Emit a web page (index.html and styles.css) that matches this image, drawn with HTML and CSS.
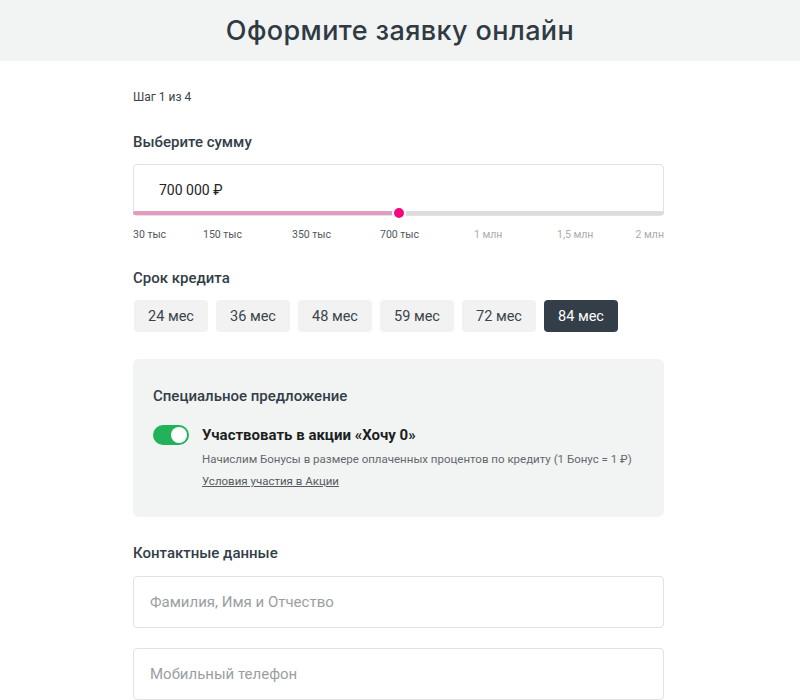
FILE: index.html
```html
<!DOCTYPE html>
<html lang="ru">
<head>
<meta charset="utf-8">
<title>Оформите заявку онлайн</title>
<link rel="stylesheet" href="styles.css">
</head>
<body>
<header class="hero">
  <h1 class="hero-title">Оформите заявку онлайн</h1>
</header>
<main class="form">
  <div class="step">Шаг 1 из 4</div>

  <h2 class="section-title">Выберите сумму</h2>
  <div class="amount">
    <div class="amount-value">700 000 ₽</div>
    <div class="slider">
      <div class="slider-fill" style="width: 50%"></div>
      <div class="slider-thumb" style="left: 50%"></div>
    </div>
  </div>
  <div class="scale">
    <span class="tick" style="left: 0px">30 тыс</span>
    <span class="tick" style="left: 70px">150 тыс</span>
    <span class="tick" style="left: 159px">350 тыс</span>
    <span class="tick" style="left: 247px">700 тыс</span>
    <span class="tick tick-muted" style="left: 341px">1 млн</span>
    <span class="tick tick-muted" style="left: 424px">1,5 млн</span>
    <span class="tick tick-muted tick-end">2 млн</span>
  </div>

  <h2 class="section-title">Срок кредита</h2>
  <div class="terms">
    <button class="term">24 мес</button>
    <button class="term">36 мес</button>
    <button class="term">48 мес</button>
    <button class="term">59 мес</button>
    <button class="term">72 мес</button>
    <button class="term term-active">84 мес</button>
  </div>

  <section class="offer">
    <h3 class="offer-title">Специальное предложение</h3>
    <div class="offer-row">
      <span class="toggle"><span class="toggle-knob"></span></span>
      <div class="offer-body">
        <div class="offer-name">Участвовать в акции «Хочу 0»</div>
        <div class="offer-desc">Начислим Бонусы в размере оплаченных процентов по кредиту (1 Бонус = 1 ₽)</div>
        <a class="offer-link" href="#">Условия участия в Акции</a>
      </div>
    </div>
  </section>

  <h2 class="section-title contacts-title">Контактные данные</h2>
  <div class="field"><span class="placeholder">Фамилия, Имя и Отчество</span></div>
  <div class="field"><span class="placeholder">Мобильный телефон</span></div>
</main>
</body>
</html>
```
FILE: styles.css
```css
* { box-sizing: border-box; }
body {
  margin: 0;
  font-family: Roboto, "Liberation Sans", sans-serif;
  color: #333e48;
  background: #fff;
}
.hero {
  height: 61px;
  background: #f2f3f3;
  display: flex;
  align-items: center;
  justify-content: center;
}
.hero-title {
  margin: 0;
  font-family: Inter, "Noto Sans", sans-serif;
  font-size: 27px;
  font-weight: 500;
  color: #2f3a43;
  letter-spacing: 0.4px;
}
.form {
  width: 531px;
  margin-left: 133px;
  padding-top: 28px;
}
.step {
  font-size: 12px;
  line-height: 16px;
  color: #3a434b;
}
.section-title {
  margin: 27px 0 12px;
  font-size: 15px;
  line-height: 20px;
  font-weight: 500;
  color: #333e48;
}
.amount {
  position: relative;
  height: 52px;
  border: 1px solid #e2e2e2;
  border-radius: 4px;
  padding-left: 25px;
  display: flex;
  align-items: center;
}
.amount-value {
  font-size: 14px;
  color: #222;
  margin-top: -1px;
}
.slider {
  position: absolute;
  left: -1px;
  right: -1px;
  bottom: 0;
  height: 4px;
  background: #dcdcdc;
  border-radius: 2px;
}
.slider-fill {
  height: 100%;
  background: #e39cc0;
  border-radius: 2px 0 0 2px;
}
.slider-thumb {
  position: absolute;
  top: 50%;
  width: 14px;
  height: 14px;
  margin: -7px 0 0 -7px;
  border-radius: 50%;
  background: #f4077f;
  border: 2px solid #fff;
}
.scale {
  position: relative;
  height: 13px;
  margin-top: 12px;
}
.tick {
  position: absolute;
  top: 0;
  font-size: 10.5px;
  line-height: 14px;
  color: #4f565c;
  white-space: nowrap;
}
.tick-muted { color: #a9adb1; }
.tick-end { right: 0; }
.terms {
  display: flex;
  gap: 8px;
  padding-left: 1px;
}
.term {
  width: 74px;
  height: 32px;
  border: none;
  border-radius: 4px;
  background: #f2f2f2;
  font-family: Roboto, "Liberation Sans", sans-serif;
  font-size: 14.5px;
  color: #3b444b;
  padding: 0;
}
.term-active {
  background: #333e48;
  color: #fff;
}
.offer {
  margin-top: 27px;
  background: #f2f3f3;
  border-radius: 6px;
  padding: 27px 20px 28px;
}
.offer-title {
  margin: 0 0 19px;
  font-size: 15px;
  line-height: 20px;
  font-weight: 500;
  color: #333e48;
}
.offer-row {
  display: flex;
  gap: 13px;
}
.toggle {
  flex: none;
  position: relative;
  width: 36px;
  height: 20px;
  border-radius: 10px;
  background: #22b35a;
}
.toggle-knob {
  position: absolute;
  right: 2px;
  top: 2px;
  width: 16px;
  height: 16px;
  border-radius: 50%;
  background: #fff;
}
.offer-body {
  display: flex;
  flex-direction: column;
  gap: 6px;
}
.offer-name {
  font-size: 15px;
  line-height: 20px;
  font-weight: 700;
  color: #1c1f22;
}
.offer-desc {
  font-size: 11.5px;
  line-height: 16px;
  color: #63696e;
}
.offer-link {
  align-self: flex-start;
  font-size: 11.5px;
  line-height: 16px;
  color: #555b60;
  text-decoration: underline;
}
.contacts-title {
  margin-top: 26px;
  margin-bottom: 13px;
}
.field {
  height: 52px;
  border: 1px solid #e2e2e2;
  border-radius: 4px;
  padding-left: 16px;
  display: flex;
  align-items: center;
  margin-bottom: 20px;
}
.placeholder {
  font-size: 15px;
  color: #9a9ea3;
}
```
